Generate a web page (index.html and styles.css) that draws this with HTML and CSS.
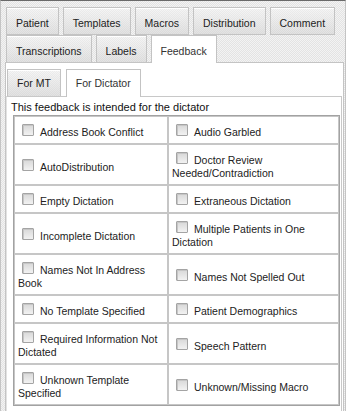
FILE: index.html
```html
<!DOCTYPE html>
<html lang="en">
<head>
    <meta charset="UTF-8">
    <title>Feedback</title>
    <link rel="stylesheet" href="styles.css">
</head>
<body>
    <div class="frame">
        <div class="tab-row">
            <div class="tab">Patient</div>
            <div class="tab">Templates</div>
            <div class="tab">Macros</div>
            <div class="tab">Distribution</div>
            <div class="tab">Comment</div>
        </div>
        <div class="tab-row tab-row-last">
            <div class="tab">Transcriptions</div>
            <div class="tab">Labels</div>
            <div class="tab active">Feedback</div>
        </div>

        <div class="panel">
            <div class="subtab-row">
                <div class="tab subtab">For MT</div>
                <div class="tab subtab active">For Dictator</div>
            </div>
            <div class="subpanel">
                <p class="intro">This feedback is intended for the dictator</p>
                <table class="feedback-table">
                    <tr>
                        <td><label><input type="checkbox">Address Book Conflict</label></td>
                        <td><label><input type="checkbox">Audio Garbled</label></td>
                    </tr>
                    <tr>
                        <td><label><input type="checkbox">AutoDistribution</label></td>
                        <td><label><input type="checkbox">Doctor Review Needed/Contradiction</label></td>
                    </tr>
                    <tr>
                        <td><label><input type="checkbox">Empty Dictation</label></td>
                        <td><label><input type="checkbox">Extraneous Dictation</label></td>
                    </tr>
                    <tr>
                        <td><label><input type="checkbox">Incomplete Dictation</label></td>
                        <td><label><input type="checkbox">Multiple Patients in One Dictation</label></td>
                    </tr>
                    <tr>
                        <td><label><input type="checkbox">Names Not In Address Book</label></td>
                        <td><label><input type="checkbox">Names Not Spelled Out</label></td>
                    </tr>
                    <tr>
                        <td><label><input type="checkbox">No Template Specified</label></td>
                        <td><label><input type="checkbox">Patient Demographics</label></td>
                    </tr>
                    <tr>
                        <td><label><input type="checkbox">Required Information Not Dictated</label></td>
                        <td><label><input type="checkbox">Speech Pattern</label></td>
                    </tr>
                    <tr>
                        <td><label><input type="checkbox">Unknown Template Specified</label></td>
                        <td><label><input type="checkbox">Unknown/Missing Macro</label></td>
                    </tr>
                </table>
            </div>
        </div>
    </div>
</body>
</html>
```

FILE: styles.css
```css
/* General */
body {
    margin: 0;
    font-family: "Liberation Sans", Arial, sans-serif;
    color: #222;
    background: #fff;
}

.frame {
    height: 411px;
    box-sizing: border-box;
    display: flex;
    flex-direction: column;
    padding: 6px 1px 0 4px;
    border-top: 1px solid #6a6a6a;
    border-left: 1px solid #c4c4c4;
    border-right: 1px solid #c4c4c4;
    background: repeating-conic-gradient(#e3e3e3 0 25%, #f3f3f3 0 50%) 0 0 / 2px 2px;
}

/* Tabs */
.tab-row {
    display: flex;
    align-items: flex-start;
    gap: 4px;
    padding-left: 1px;
}

.tab {
    height: 28px;
    box-sizing: border-box;
    padding: 8px 9px 0;
    font-size: 10.5px;
    line-height: 14px;
    white-space: nowrap;
    border: 1px solid #c3c3c3;
    box-shadow: inset 0 1px 0 #fff;
    background:
        repeating-conic-gradient(rgba(0, 0, 0, 0.035) 0 25%, transparent 0 50%) 0 0 / 2px 2px,
        linear-gradient(#f6f6f6, #e2e2e2);
}

.tab-row-last .tab {
    height: 27px;
    border-bottom: none;
}

.tab.active {
    position: relative;
    z-index: 1;
    height: 28px;
    margin-bottom: -1px;
    background: #fff;
    color: #333;
}

/* Panel */
.panel {
    flex: 1;
    display: flex;
    flex-direction: column;
    padding-top: 6px;
    background: #fff;
    border: 1px solid #c4c4c4;
    border-bottom: none;
}

.subtab-row {
    display: flex;
    align-items: flex-start;
    gap: 5px;
    padding-left: 1px;
}

.subtab {
    height: 27px;
    padding-top: 6px;
    border-bottom: none;
}

.subtab.active {
    height: 28px;
}

.subpanel {
    flex: 1;
    margin-right: 1px;
    padding: 3px 0 0 4px;
    border: 1px solid #c8c8c8;
    border-left-color: #e2e2e2;
    border-bottom: none;
}

.intro {
    margin: 0;
    font-size: 11px;
    line-height: 14px;
    color: #111;
}

/* Feedback checklist */
.feedback-table {
    width: 327px;
    margin: 1px 0 0 2px;
    table-layout: fixed;
    border-collapse: separate;
    border-spacing: 0;
    border: 1px solid #a2a2a2;
}

.feedback-table td {
    padding: 3px 3px 4px;
    font-size: 10.5px;
    line-height: 13px;
    vertical-align: middle;
    border: 1px solid #c6c6c6;
    color: #222;
}

.feedback-table td:first-child {
    width: 146px;
}

.feedback-table input[type="checkbox"] {
    -webkit-appearance: none;
    appearance: none;
    width: 12px;
    height: 12px;
    box-sizing: border-box;
    margin: 4px 6px 0 4px;
    vertical-align: baseline;
    border: 1px solid #a4a4a4;
    border-radius: 1px;
    background: linear-gradient(#d8d8d8, #f2f2f2);
    box-shadow: inset 1px 1px 0 #c6c6c6;
}
```
